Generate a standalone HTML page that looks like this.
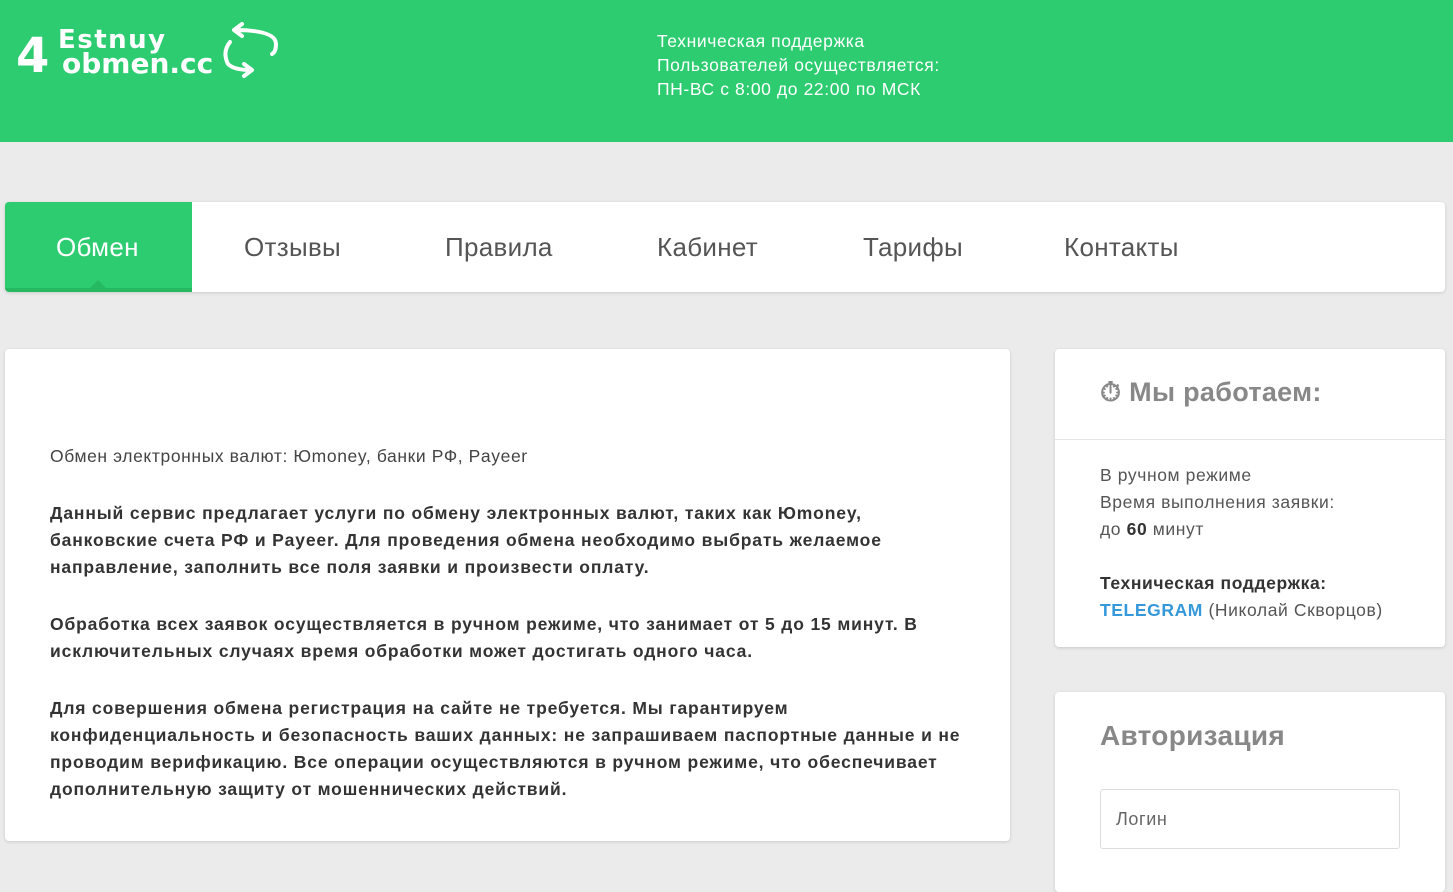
<!DOCTYPE html>
<html><head><meta charset="utf-8"><style>
*{margin:0;padding:0;box-sizing:border-box}
body{width:1453px;height:872px;background:#ebebeb;font-family:"Liberation Sans","DejaVu Sans",sans-serif;color:#333;position:relative;overflow:hidden;letter-spacing:.6px}
.hdr{position:absolute;left:0;top:0;width:1453px;height:142px;background:#2ecc71}
.sup{position:absolute;left:657px;top:29px;color:#fff;font-size:17.5px;line-height:24px}
.nav{position:absolute;left:5px;top:202px;width:1440px;height:90px;background:#fff;border-radius:4px;box-shadow:0 1px 3px rgba(0,0,0,.15);letter-spacing:.3px}
.nav a{position:absolute;top:0;height:90px;line-height:90px;font-size:26px;color:#555;text-decoration:none}
.act{position:absolute;left:0;top:0;width:187px;height:90px;background:#2ecc71;border-radius:4px 0 0 4px;border-bottom:4px solid #27b862}
.act:after{content:"";position:absolute;left:85px;bottom:0;border:8px solid transparent;border-bottom-color:#27b862;border-top:0}
.card{position:absolute;background:#fff;border-radius:4px;box-shadow:0 1px 3px rgba(0,0,0,.15)}
.main{left:5px;top:349px;width:1005px;height:492px}
.main p{position:absolute;left:45px;font-size:17.5px;line-height:27px;white-space:nowrap}
.b{font-weight:bold;color:#333;letter-spacing:.85px}
.side h3{font-size:27px;color:#888;font-weight:bold;letter-spacing:.3px}
.side p{font-size:17.5px;line-height:27px;color:#555}
</style></head><body>
<div class="hdr">
<svg style="position:absolute;left:14px;top:14px" width="270" height="70" viewBox="0 0 270 70">
<text x="2" y="58" font-family="DejaVu Sans" font-weight="bold" font-size="48" fill="#fff">4</text>
<text x="44" y="34" font-family="DejaVu Sans" font-weight="bold" font-size="26" fill="#fff" letter-spacing="1.5">Estnuy</text>
<text x="48" y="59" font-family="DejaVu Sans" font-weight="bold" font-size="28" fill="#fff" letter-spacing="0">obmen.cc</text>
<path d="M228 10 L220 16 L228 22 M220 16 Q262 16 262 30 Q262 38 258 40 M216 28 Q208 38 214 50 Q220 56 236 56 M230 50 L238 56 L230 62" stroke="#fff" stroke-width="4" fill="none" stroke-linecap="round" stroke-linejoin="round"/>
</svg>
<div class="sup">Техническая поддержка<br>Пользователей осуществляется:<br>ПН-ВС с 8:00 до 22:00 по МСК</div>
</div>
<div class="nav">
<div class="act"></div>
<a style="left:51px;color:#fff">Обмен</a>
<a style="left:239px">Отзывы</a>
<a style="left:440px">Правила</a>
<a style="left:652px">Кабинет</a>
<a style="left:858px">Тарифы</a>
<a style="left:1059px">Контакты</a>
</div>
<div class="card main">
<p style="top:94px;color:#444">Обмен электронных валют: Юmoney, банки РФ, Payeer</p>
<p class="b" style="top:151px">Данный сервис предлагает услуги по обмену электронных валют, таких как Юmoney,<br>банковские счета РФ и Payeer. Для проведения обмена необходимо выбрать желаемое<br>направление, заполнить все поля заявки и произвести оплату.</p>
<p class="b" style="top:262px">Обработка всех заявок осуществляется в ручном режиме, что занимает от 5 до 15 минут. В<br>исключительных случаях время обработки может достигать одного часа.</p>
<p class="b" style="top:346px">Для совершения обмена регистрация на сайте не требуется. Мы гарантируем<br>конфиденциальность и безопасность ваших данных: не запрашиваем паспортные данные и не<br>проводим верификацию. Все операции осуществляются в ручном режиме, что обеспечивает<br>дополнительную защиту от мошеннических действий.</p>
</div>
<div class="card side" style="left:1055px;top:349px;width:390px;height:298px">
<h3 style="position:absolute;left:45px;top:28px">⏱ Мы работаем:</h3>
<div style="position:absolute;left:0;top:90px;width:390px;border-top:1px solid #e5e5e5"></div>
<p style="position:absolute;left:45px;top:113px">В ручном режиме<br>Время выполнения заявки:<br>до <b style="color:#333">60</b> минут</p>
<p style="position:absolute;left:45px;top:221px"><b style="color:#333">Техническая поддержка:</b><br><b style="color:#3498db">TELEGRAM</b> (Николай Скворцов)</p>
</div>
<div class="card side" style="left:1055px;top:692px;width:390px;height:200px">
<h3 style="position:absolute;left:45px;top:28px;font-size:28px">Авторизация</h3>
<div style="position:absolute;left:45px;top:97px;width:300px;height:60px;border:1px solid #ddd;border-radius:3px;padding-left:15px;line-height:58px;font-size:18px;color:#666">Логин</div>
</div>
</body></html>
